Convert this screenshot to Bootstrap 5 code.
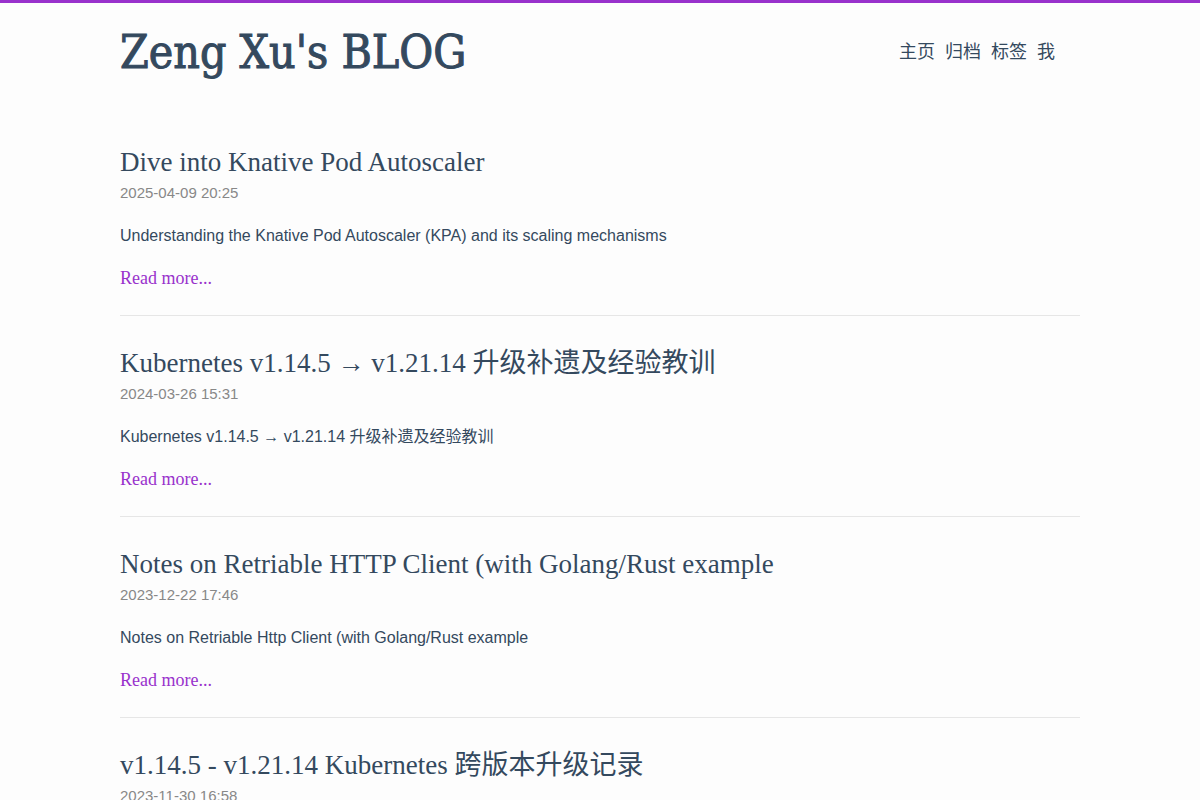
<!DOCTYPE html>
<html lang="zh-CN">
<head>
<meta charset="utf-8">
<meta name="viewport" content="width=device-width, initial-scale=1">
<title>Zeng Xu's BLOG</title>
<link href="https://cdn.jsdelivr.net/npm/bootstrap@5.3.0/dist/css/bootstrap.min.css" rel="stylesheet">
<style>
body{font-family:"Liberation Sans","Noto Sans CJK SC",sans-serif;color:#34495e;background:#fdfdfd;border-top:3px solid #9932cc;font-size:16px;line-height:24px}
.page-wrap{max-width:1008px;padding:0 24px}
.site-head{padding:19px 0;margin-bottom:43px}
.site-title{font:400 46px/60px "DejaVu Serif Condensed","DejaVu Serif",serif;color:#34495e;-webkit-text-stroke:1px #34495e}
.site-nav{gap:10px;padding-right:25px}
.site-nav a{font-size:18px;color:#34495e}
.post-title{font:400 27px/36px "Liberation Serif","Noto Sans CJK SC",serif}
.post-title a{color:#34495e}
.post-date{font-size:15px;line-height:26px;color:#888}
.post-desc{margin:18px 0}
.read-more{font:18px/24px "Liberation Serif",serif;color:#9932cc}
.post-item{border-bottom:1px solid #e6e6e6;padding-bottom:25px;margin-bottom:29px}
</style>
</head>
<body>
<div class="page-wrap mx-auto">
<header class="site-head d-flex justify-content-between align-items-center flex-wrap">
<a class="site-title text-decoration-none" href="#">Zeng Xu's BLOG</a>
<nav class="site-nav d-flex">
<a class="text-decoration-none" href="#">主页</a>
<a class="text-decoration-none" href="#">归档</a>
<a class="text-decoration-none" href="#">标签</a>
<a class="text-decoration-none" href="#">我</a>
</nav>
</header>
<main>
<article class="post-item">
<h2 class="post-title mb-0"><a class="text-decoration-none" href="#">Dive into Knative Pod Autoscaler</a></h2>
<time class="post-date d-block">2025-04-09 20:25</time>
<p class="post-desc">Understanding the Knative Pod Autoscaler (KPA) and its scaling mechanisms</p>
<div class="d-flex"><a class="read-more text-decoration-none" href="#">Read more...</a></div>
</article>
<article class="post-item">
<h2 class="post-title mb-0"><a class="text-decoration-none" href="#">Kubernetes v1.14.5 → v1.21.14 升级补遗及经验教训</a></h2>
<time class="post-date d-block">2024-03-26 15:31</time>
<p class="post-desc">Kubernetes v1.14.5 → v1.21.14 升级补遗及经验教训</p>
<div class="d-flex"><a class="read-more text-decoration-none" href="#">Read more...</a></div>
</article>
<article class="post-item">
<h2 class="post-title mb-0"><a class="text-decoration-none" href="#">Notes on Retriable HTTP Client (with Golang/Rust example</a></h2>
<time class="post-date d-block">2023-12-22 17:46</time>
<p class="post-desc">Notes on Retriable Http Client (with Golang/Rust example</p>
<div class="d-flex"><a class="read-more text-decoration-none" href="#">Read more...</a></div>
</article>
<article>
<h2 class="post-title mb-0"><a class="text-decoration-none" href="#">v1.14.5 - v1.21.14 Kubernetes 跨版本升级记录</a></h2>
<time class="post-date d-block">2023-11-30 16:58</time>
</article>
</main>
</div>
<script src="https://cdn.jsdelivr.net/npm/bootstrap@5.3.0/dist/js/bootstrap.bundle.min.js"></script>
</body>
</html>
